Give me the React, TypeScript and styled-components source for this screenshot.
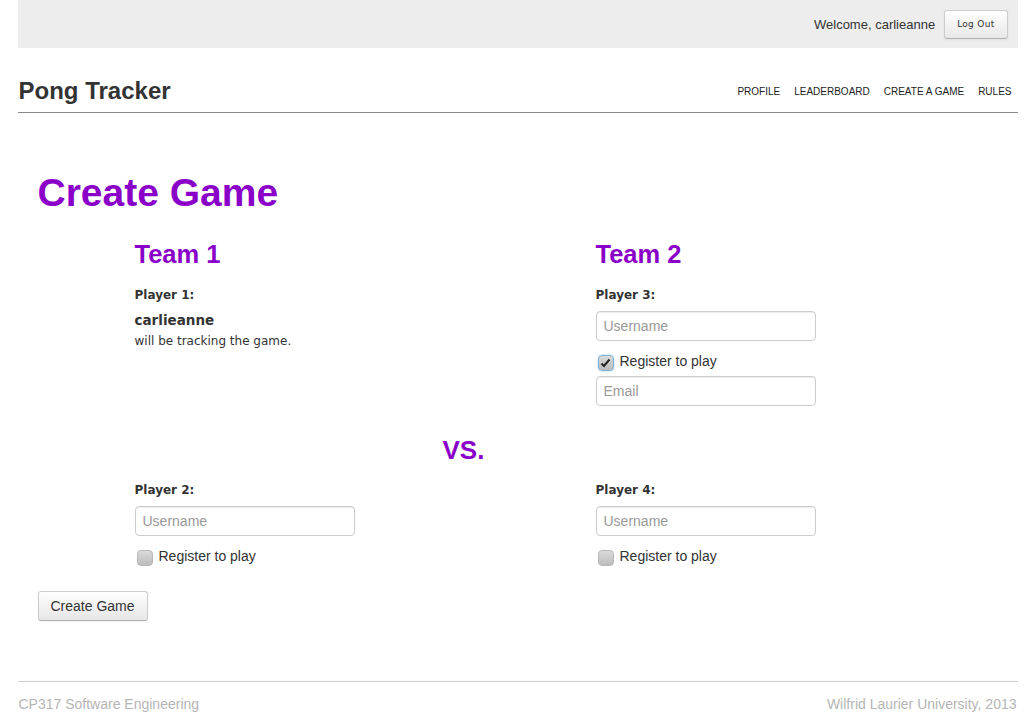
import React from "react";
import styled, { createGlobalStyle } from "styled-components";

const purple = "#8a00c8";

const GlobalStyle = createGlobalStyle`
  body {
    margin: 0;
    background: #fff;
    font-family: "Liberation Sans", Arial, sans-serif;
    color: #333;
  }
`;

const Page = styled.div`
  width: 1000px;
  margin: 0 auto;
`;

const TopBar = styled.div`
  height: 48px;
  background: #ededed;
  display: flex;
  align-items: center;
  justify-content: flex-end;
  gap: 9px;
  padding-right: 10px;
`;

const Welcome = styled.span`
  font-size: 13px;
  color: #333;
`;

const SmallButton = styled.button`
  height: 29px;
  padding: 0 12px;
  font-family: "DejaVu Sans", sans-serif;
  font-size: 9px;
  letter-spacing: 0.3px;
  color: #333;
  background: linear-gradient(#fff, #e8e8e8);
  border: 1px solid #ccc;
  border-bottom-color: #b3b3b3;
  border-radius: 3px;
  box-shadow: 0 1px 2px rgba(0, 0, 0, 0.05);
`;

const Header = styled.div`
  display: flex;
  align-items: flex-end;
  justify-content: space-between;
  height: 65px;
  border-bottom: 1px solid #888;
  padding: 0 6px 0 1px;
  box-sizing: border-box;
`;

const Brand = styled.div`
  font-size: 24px;
  font-weight: bold;
  color: #333;
  padding-bottom: 7px;
`;

const Nav = styled.nav`
  display: flex;
  gap: 14px;
  padding-bottom: 15px;
`;

const NavLink = styled.a`
  font-size: 10px;
  color: #222;
  text-transform: uppercase;
  text-decoration: none;
`;

const Main = styled.div`
  padding: 58px 20px 0;
`;

const Title = styled.h1`
  margin: 0;
  font-size: 39px;
  line-height: 44px;
  font-weight: bold;
  color: ${purple};
`;

const Form = styled.div`
  display: grid;
  grid-template-columns: 461px 1fr;
  padding-left: 97px;
  margin-top: 24px;
`;

const Column = styled.div`
  display: flex;
  flex-direction: column;
`;

const TeamName = styled.h2`
  margin: 0 0 17px;
  font-size: 25.5px;
  line-height: 30px;
  font-weight: bold;
  color: ${purple};
`;

const Label = styled.div`
  font-family: "DejaVu Sans", sans-serif;
  font-weight: bold;
  font-size: 12px;
  line-height: 18px;
  color: #333;
  margin-bottom: 7px;
`;

const Tracker = styled.div`
  font-family: "DejaVu Sans", sans-serif;
  font-weight: bold;
  font-size: 13.5px;
  line-height: 18px;
  color: #333;
`;

const Note = styled.div`
  font-family: "DejaVu Sans", sans-serif;
  font-size: 12px;
  line-height: 24px;
  color: #333;
`;

const Input = styled.input`
  width: 220px;
  height: 30px;
  box-sizing: border-box;
  padding: 0 7px;
  font-family: "Liberation Sans", Arial, sans-serif;
  font-size: 14px;
  color: #555;
  border: 1px solid #ccc;
  border-radius: 4px;
  box-shadow: inset 0 1px 1px rgba(0, 0, 0, 0.075);
  &::placeholder {
    color: #999;
  }
`;

const CheckRow = styled.label`
  display: flex;
  align-items: flex-start;
  gap: 6px;
  margin: 12px 0 5px 2px;
  font-size: 14px;
  line-height: 17px;
  color: #333;
`;

const Box = styled.span<{ $checked?: boolean }>`
  width: 16px;
  height: 16px;
  margin-top: 2px;
  border-radius: 4px;
  box-sizing: border-box;
  border: 1px solid ${(p) => (p.$checked ? "#7fb2d8" : "#b8b8b8")};
  background: linear-gradient(#dadada, #bcbcbc);
  box-shadow: ${(p) => (p.$checked ? "0 0 2px #8cc3ec" : "none")};
  display: flex;
  align-items: center;
  justify-content: center;
`;

const Versus = styled.div`
  grid-column: 1 / span 2;
  margin: 29px 0 16px;
  padding-left: 308px;
  font-size: 26px;
  line-height: 30px;
  font-weight: bold;
  color: ${purple};
`;

const Submit = styled.button`
  margin-top: 20px;
  height: 30px;
  padding: 0 12px;
  font-family: "Liberation Sans", Arial, sans-serif;
  font-size: 14px;
  color: #333;
  background: linear-gradient(#fff, #e6e6e6);
  border: 1px solid #ccc;
  border-bottom-color: #b3b3b3;
  border-radius: 3px;
  box-shadow: 0 1px 2px rgba(0, 0, 0, 0.05);
`;

const Footer = styled.div`
  margin-top: 60px;
  border-top: 1px solid #ccc;
  display: flex;
  justify-content: space-between;
  padding: 14px 1px 0;
  font-size: 14px;
  color: #b5b5b5;
`;

const Check = ({ checked }: { checked?: boolean }) => (
  <CheckRow>
    <Box $checked={checked}>
      {checked && (
        <svg width="11" height="10" viewBox="0 0 11 10">
          <path d="M1.5 5.5 L4 8 L9.5 1.5" fill="none" stroke="#222" strokeWidth="2" />
        </svg>
      )}
    </Box>
    Register to play
  </CheckRow>
);

export default function App() {
  return (
    <Page>
      <GlobalStyle />
      <TopBar>
        <Welcome>Welcome, carlieanne</Welcome>
        <SmallButton>Log Out</SmallButton>
      </TopBar>
      <Header>
        <Brand>Pong Tracker</Brand>
        <Nav>
          {["Profile", "Leaderboard", "Create a Game", "Rules"].map((n) => (
            <NavLink key={n} href="#">
              {n}
            </NavLink>
          ))}
        </Nav>
      </Header>
      <Main>
        <Title>Create Game</Title>
        <Form>
          <Column>
            <TeamName>Team 1</TeamName>
            <Label>Player 1:</Label>
            <Tracker>carlieanne</Tracker>
            <Note>will be tracking the game.</Note>
          </Column>
          <Column>
            <TeamName>Team 2</TeamName>
            <Label>Player 3:</Label>
            <Input placeholder="Username" />
            <Check checked />
            <Input placeholder="Email" />
          </Column>
          <Versus>VS.</Versus>
          <Column>
            <Label>Player 2:</Label>
            <Input placeholder="Username" />
            <Check />
          </Column>
          <Column>
            <Label>Player 4:</Label>
            <Input placeholder="Username" />
            <Check />
          </Column>
        </Form>
        <Submit>Create Game</Submit>
      </Main>
      <Footer>
        <span>CP317 Software Engineering</span>
        <span>Wilfrid Laurier University, 2013</span>
      </Footer>
    </Page>
  );
}
